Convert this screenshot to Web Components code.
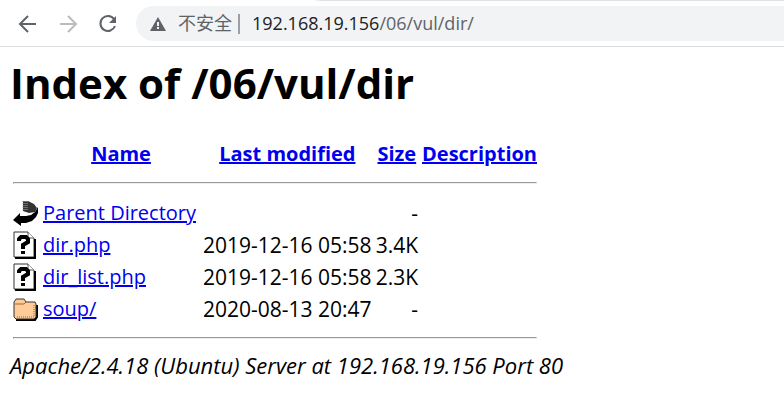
<!DOCTYPE html>
<html lang="zh-CN">
<head>
<meta charset="utf-8">
<title>Index of /06/vul/dir</title>
<style>
body { margin: 0; background: #fff; color: #000; font: 20px/28px "Open Sans", "Noto Sans", "Noto Sans CJK SC", sans-serif; }
</style>
</head>
<body>
<browser-toolbar><span slot="status">不安全</span><span slot="host">192.168.19.156</span><span slot="path">/06/vul/dir/</span></browser-toolbar>
<directory-index heading="Index of /06/vul/dir"><span slot="signature">Apache/2.4.18 (Ubuntu) Server at 192.168.19.156 Port 80</span></directory-index>

<script>
class ListingIcon extends HTMLElement {
  connectedCallback() {
    const art = {
      back: `<svg width="25" height="28" viewBox="0 0 25 28"><path d="M10 2h5l6 3 3 4-2 4-6 1-6-2z" fill="#333"/><path d="M10 2v10M12 2v10M14 2v10" stroke="#aaa" stroke-dasharray="1 1"/><path d="M25 8v6l-2 4-4 4-6 2H8v3L0 21l7-7v3h6l5-1 4-3z"/></svg>`,
      unknown: `<svg width="23" height="28" viewBox="0 0 23 28"><path d="M1 1h14l6 6v19H1z" fill="#fff" stroke="#333" stroke-width="1"/><path d="M22 8v19H2" fill="none" stroke="#000" stroke-width="2"/><path d="M15 1v6h6" fill="#fff" stroke="#555"/><path d="M6 10V8l2-2h5l2 2v3l-5 3v4" fill="none" stroke="#000" stroke-width="4"/><path d="M8 20h4v3H8z"/></svg>`,
      folder: `<svg width="25" height="23" viewBox="0 0 25 23"><path d="M3 22h19l2-3V7" fill="none" stroke="#000" stroke-width="2"/><path d="M1 4l2-3h8l2 3h9l1 2v13l-2 2H3l-2-2z" fill="#fc9" stroke="#333"/><path d="M2 6h9l2-2" fill="none" stroke="#963"/><path d="M4 19h17M21 7v12" stroke="#963" stroke-dasharray="1 1"/></svg>`
    };
    this.attachShadow({ mode: "open" }).innerHTML =
      `<style>:host{display:block;width:26px}svg{display:block}</style>${art[this.getAttribute("kind")]}`;
  }
}
customElements.define("listing-icon", ListingIcon);

class BrowserToolbar extends HTMLElement {
  constructor() {
    super();
    this.attachShadow({ mode: "open" }).innerHTML = `
<style>
:host { display: block; background: #fff; border-bottom: 1px solid #dadce0; font-size: 18px; line-height: 35px; color: #5f6368; }
.strip { height: 1px; background: linear-gradient(to right, #fff 40%, #dee1e6 41%); }
.bar { display: flex; align-items: center; gap: 16px; padding: 5px 0 5px 16px; }
button { flex: none; width: 24px; height: 24px; padding: 0; border: 0; background: none; color: #5f6368; }
button:disabled { color: #babcbe; }
svg { display: block; fill: none; stroke: currentColor; stroke-width: 2; }
.address { flex: 1; display: flex; align-items: center; height: 35px; padding-left: 14px; border-radius: 18px 0 0 18px; background: #f1f3f4; white-space: nowrap; }
.warning { flex: none; fill: currentColor; stroke: none; }
.status { margin-left: 12px; }
.divider { width: 2px; height: 20px; margin: 0 12px 0 6px; background: #9aa0a6; }
.host { color: #202124; }
</style>
<div class="strip"></div>
<div class="bar">
<button type="button" aria-label="后退"><svg width="24" height="24"><path d="M20 12H5M12 4l-8 8 8 8"/></svg></button>
<button type="button" aria-label="前进" disabled><svg width="24" height="24"><path d="M4 12h15M12 4l8 8-8 8"/></svg></button>
<button type="button" aria-label="重新加载"><svg width="24" height="24"><path d="M18 7a7.500 7.500 0 1 0 1 7"/><path d="M20 4v7h-7z" fill="currentColor" stroke="none"/></svg></button>
<div class="address">
<svg class="warning" width="16" height="14"><path d="M8 0l8 14H0z"/><path d="M7 5h2v4H7zM7 10h2v2H7z" fill="#f1f3f4"/></svg>
<span class="status"><slot name="status"></slot></span><span class="divider"></span><span class="host"><slot name="host"></slot></span><slot name="path"></slot>
</div>
</div>`;
  }
}
customElements.define("browser-toolbar", BrowserToolbar);

class DirectoryIndex extends HTMLElement {
  connectedCallback() {
    const rows = [
      ["back", "Parent Directory", "", "-"],
      ["unknown", "dir.php", "2019-12-16 05:58", "3.4K"],
      ["unknown", "dir_list.php", "2019-12-16 05:58", "2.3K"],
      ["folder", "soup/", "2020-08-13 20:47", "-"]
    ].map(([kind, name, date, size]) =>
      `<tr><td><listing-icon kind="${kind}"></listing-icon></td><td class="name"><a href="#">${name}</a></td><td class="end">${date}</td><td class="end">${size}</td><td></td></tr>`).join("");
    this.attachShadow({ mode: "open" }).innerHTML = `
<style>
:host { display: block; padding: 8px 10px; }
h1 { margin: 0 0 24px; font-size: 42px; line-height: 56px; }
table { margin-top: 26px; border-spacing: 2px; border-collapse: separate; }
td, th { padding: 1px; white-space: nowrap; }
.name { padding-right: 4px; }
.end { text-align: right; font-size: 21px; }
a { color: #00e; text-decoration: underline; }
hr { margin: 10px 0 11px; border: 1px solid; border-color: #9a9a9a #eee #eee #9a9a9a; }
address { font-style: italic; font-size: 22px; line-height: 24px; }
</style>
<h1>${this.getAttribute("heading")}</h1>
<table>
<tr><th></th><th><a href="#">Name</a></th><th><a href="#">Last modified</a></th><th><a href="#">Size</a></th><th><a href="#">Description</a></th></tr>
<tr><td colspan="5"><hr></td></tr>
${rows}
<tr><td colspan="5"><hr></td></tr>
</table>
<address><slot name="signature"></slot></address>`;
  }
}
customElements.define("directory-index", DirectoryIndex);
</script>
</body>
</html>
